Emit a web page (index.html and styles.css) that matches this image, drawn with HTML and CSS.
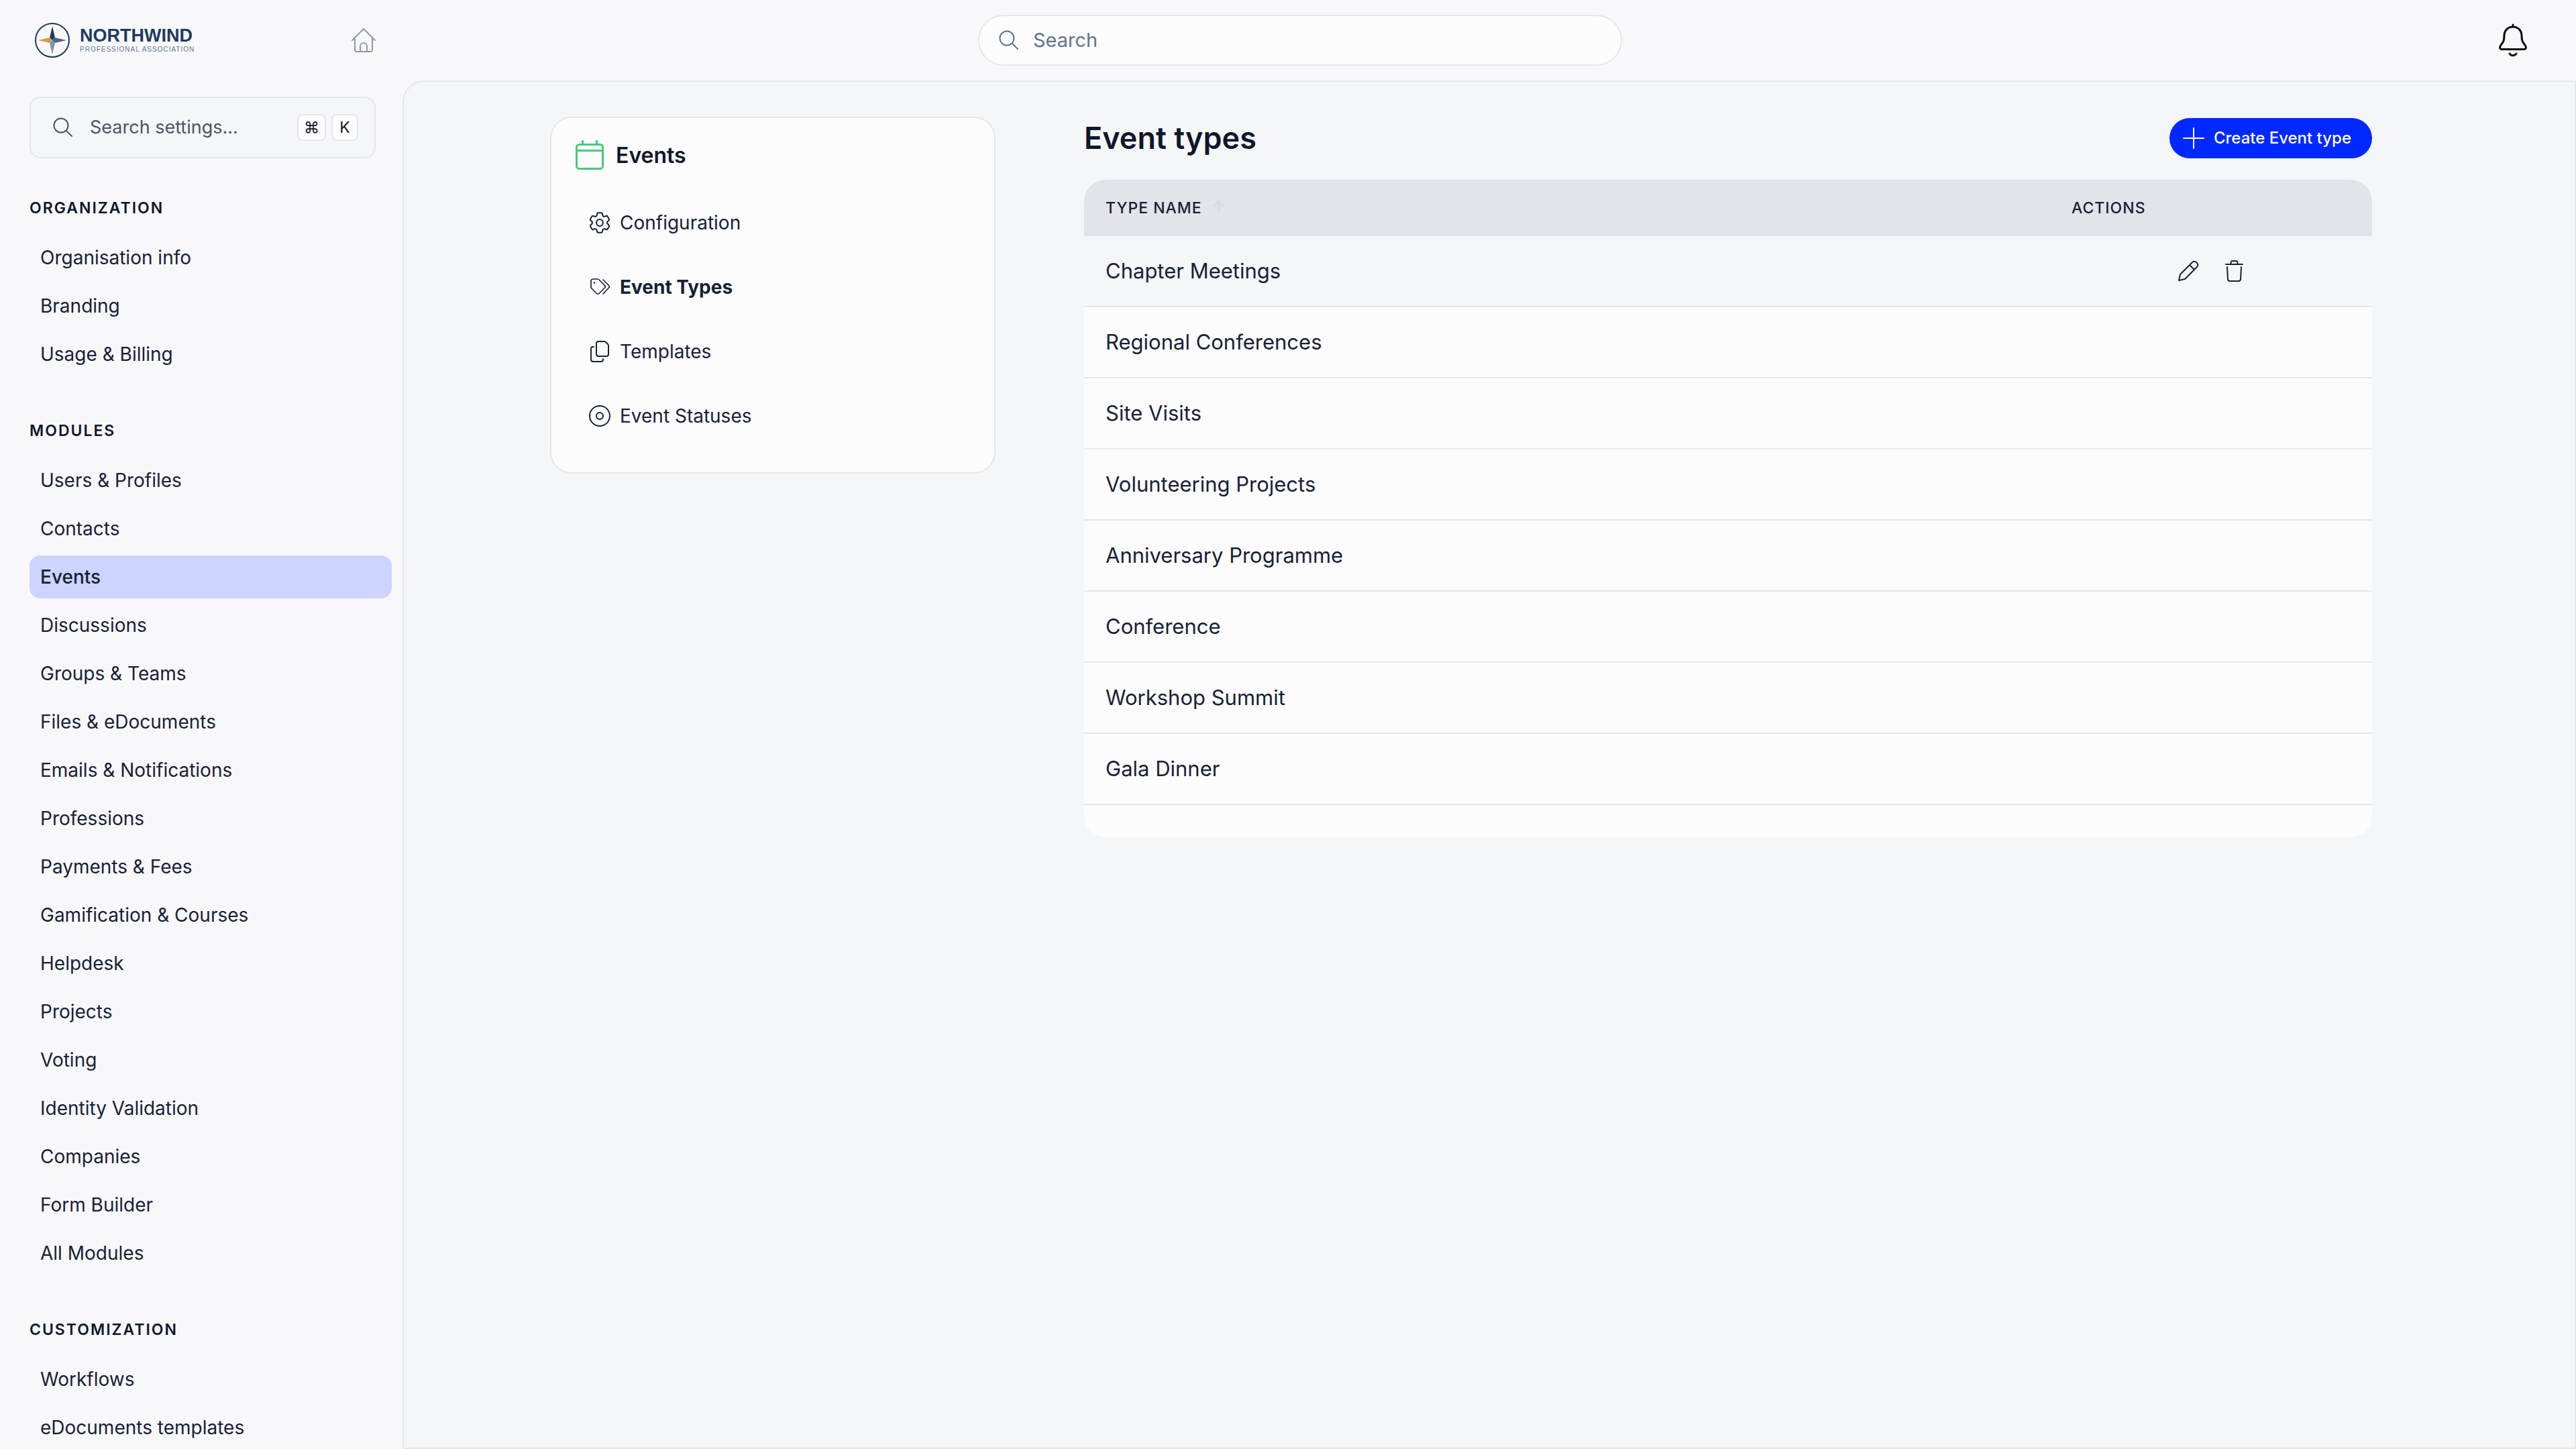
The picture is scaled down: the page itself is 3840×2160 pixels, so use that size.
FILE: index.html
```html
<!DOCTYPE html>
<html lang="en">
<head>
    <meta charset="UTF-8">
    <meta name="viewport" content="width=device-width, initial-scale=1.0">
    <title>Event types</title>
    <link rel="stylesheet" href="styles.css">
</head>
<body>
    <header class="topbar">
        <div class="brand">
            <a class="logo" href="#">
                <svg class="logo-mark" viewBox="0 0 52 52">
                    <circle cx="26" cy="26" r="25" fill="none" stroke="#1f3a5f" stroke-width="2"/>
                    <path d="M26 5l4 17L26 26l-4-4z" fill="#1f3a5f"/>
                    <path d="M47 26l-17 4L26 26l4-4z" fill="#4f6688"/>
                    <path d="M26 47l-4-17L26 26l4 4z" fill="#8294ac"/>
                    <path d="M5 26l17-4L26 26l-4 4z" fill="#c9a14a"/>
                </svg>
                <span class="logo-text">
                    <span class="logo-name">NORTHWIND</span>
                    <span class="logo-sub">PROFESSIONAL ASSOCIATION</span>
                </span>
            </a>
            <a class="home" href="#" aria-label="Home">
                <svg viewBox="0 0 36 36">
                    <path d="M1 18L18 1l17 17M5 15v17a3 3 0 0 0 3 3h20a3 3 0 0 0 3-3V15M13 35v-8a5 5 0 0 1 10 0v8"/>
                </svg>
            </a>
        </div>
        <label class="search">
            <svg viewBox="0 0 32 32"><circle cx="13" cy="13" r="10.500"/><path d="M21 21l8 8"/></svg>
            <input type="text" placeholder="Search" aria-label="Search">
        </label>
        <button class="bell" aria-label="Notifications">
            <svg viewBox="0 0 44 50">
                <path d="M22 2v3M22 5c-8 0-13 6-13 13 0 9-2 10-5.500 15-2 3-.5 5.500 2 5.500h33c2.500 0 4-2.500 2-5.500C37 28 35 27 35 18c0-7-5-13-13-13z"/>
                <path d="M17 45c2.500 3.600 7.500 3.600 10 0"/>
            </svg>
        </button>
    </header>

    <div class="layout">
        <aside class="sidebar">
            <label class="settings-search">
                <svg viewBox="0 0 32 32"><circle cx="13" cy="13" r="10.500"/><path d="M21 21l8 8"/></svg>
                <input type="text" placeholder="Search settings..." aria-label="Search settings">
                <kbd>⌘</kbd>
                <kbd>K</kbd>
            </label>
            <nav>
                <h2>Organization</h2>
                <ul>
                    <li><a href="#">Organisation info</a></li>
                    <li><a href="#">Branding</a></li>
                    <li><a href="#">Usage &amp; Billing</a></li>
                </ul>
                <h2>Modules</h2>
                <ul>
                    <li><a href="#">Users &amp; Profiles</a></li>
                    <li><a href="#">Contacts</a></li>
                    <li><a href="#" class="active">Events</a></li>
                    <li><a href="#">Discussions</a></li>
                    <li><a href="#">Groups &amp; Teams</a></li>
                    <li><a href="#">Files &amp; eDocuments</a></li>
                    <li><a href="#">Emails &amp; Notifications</a></li>
                    <li><a href="#">Professions</a></li>
                    <li><a href="#">Payments &amp; Fees</a></li>
                    <li><a href="#">Gamification &amp; Courses</a></li>
                    <li><a href="#">Helpdesk</a></li>
                    <li><a href="#">Projects</a></li>
                    <li><a href="#">Voting</a></li>
                    <li><a href="#">Identity Validation</a></li>
                    <li><a href="#">Companies</a></li>
                    <li><a href="#">Form Builder</a></li>
                    <li><a href="#">All Modules</a></li>
                </ul>
                <h2>Customization</h2>
                <ul>
                    <li><a href="#">Workflows</a></li>
                    <li><a href="#">eDocuments templates</a></li>
                </ul>
            </nav>
        </aside>

        <main class="content">
            <nav class="card">
                <h3>
                    <svg viewBox="0 0 44 46"><rect x="1.500" y="6.500" width="39" height="36" rx="4"/><path d="M1.500 15.500h39M10.500 1v5M31.500 1v5"/></svg>
                    Events
                </h3>
                <a href="#">
                    <svg viewBox="2.250 2.250 19.500 19.500" stroke-width="1.250">
                        <path d="M9.594 3.940c.09-.542.56-.940 1.110-.940h2.593c.55 0 1.020.398 1.110.940l.213 1.281c.063.374.313.686.645.870.074.040.147.083.220.127.325.196.720.257 1.075.124l1.217-.456a1.125 1.125 0 0 1 1.370.490l1.296 2.247a1.125 1.125 0 0 1-.260 1.431l-1.003.827c-.293.241-.438.613-.430.992a7 7 0 0 1 0 .255c-.008.378.137.750.430.991l1.004.827c.424.350.534.955.260 1.430l-1.298 2.247a1.125 1.125 0 0 1-1.369.491l-1.217-.456c-.355-.133-.750-.072-1.076.124a7 7 0 0 1-.220.128c-.331.183-.581.495-.644.869l-.213 1.281c-.090.543-.560.940-1.110.940h-2.594c-.550 0-1.019-.398-1.110-.940l-.213-1.281c-.062-.374-.312-.686-.644-.870a7 7 0 0 1-.220-.127c-.325-.196-.720-.257-1.076-.124l-1.217.456a1.125 1.125 0 0 1-1.369-.490l-1.297-2.247a1.125 1.125 0 0 1 .260-1.431l1.004-.827c.292-.240.437-.613.430-.991a7 7 0 0 1 0-.255c.007-.380-.138-.751-.430-.992l-1.004-.827a1.125 1.125 0 0 1-.260-1.430l1.297-2.247a1.125 1.125 0 0 1 1.370-.491l1.216.456c.356.133.751.072 1.076-.124.072-.044.146-.086.220-.128.332-.183.582-.495.644-.869z"/>
                        <circle cx="12" cy="12" r="3"/>
                    </svg>
                    Configuration
                </a>
                <a href="#" class="current">
                    <svg viewBox="0 0 32 32" stroke-width="1.700">
                        <path d="M3 7a3 3 0 0 1 3-3h7a3 3 0 0 1 2 1l8.500 8.500a2.500 2.500 0 0 1 0 3.500l-8.500 8.500a2.500 2.500 0 0 1-3.500 0L4 18a3 3 0 0 1-1-2z"/>
                        <path d="M21 5l8.500 8.500a2.500 2.500 0 0 1 0 3.500L21 26"/>
                        <circle cx="8" cy="9.500" r=".5"/>
                    </svg>
                    Event Types
                </a>
                <a href="#">
                    <svg viewBox="0 0 32 32" stroke-width="2">
                        <path d="M11 4a3 3 0 0 1 3-3h9a3 3 0 0 1 2 1l3 3a3 3 0 0 1 1 2v13a3 3 0 0 1-3 3H14a3 3 0 0 1-3-3zM7 9H6a3 3 0 0 0-3 3v16a3 3 0 0 0 3 3h12a3 3 0 0 0 3-3v-1"/>
                    </svg>
                    Templates
                </a>
                <a href="#">
                    <svg viewBox="0 0 32 32" stroke-width="2"><circle cx="16" cy="16" r="15"/><circle cx="16" cy="16" r="5"/></svg>
                    Event Statuses
                </a>
            </nav>

            <section class="types">
                <div class="types-head">
                    <h1>Event types</h1>
                    <button class="create">
                        <svg viewBox="0 0 32 32"><path d="M16 1v30M1 16h30"/></svg>
                        Create Event type
                    </button>
                </div>
                <div class="table-wrap">
                    <table>
                        <thead>
                            <tr>
                                <th class="col-name">Type name <svg viewBox="0 0 16 20"><path d="M8 19V2M1 9l7-7 7 7"/></svg></th>
                                <th class="col-actions">Actions</th>
                            </tr>
                        </thead>
                        <tbody>
                            <tr class="hovered">
                                <td>Chapter Meetings</td>
                                <td>
                                    <div class="actions">
                                        <button aria-label="Edit">
                                            <svg viewBox="0 0 32 32"><path d="M2 30l2-9L22 3a4 4 0 0 1 6 0l1 1a4 4 0 0 1 0 6L11 28zM18 7l7 7"/></svg>
                                        </button>
                                        <button aria-label="Delete">
                                            <svg viewBox="0 0 32 32"><path d="M4 6h25M11 6l1-4a2 2 0 0 1 2-1h5a2 2 0 0 1 2 1l1 4M6 10l1 18a3 3 0 0 0 3 3h13a3 3 0 0 0 3-3l1-18"/></svg>
                                        </button>
                                    </div>
                                </td>
                            </tr>
                            <tr><td>Regional Conferences</td><td></td></tr>
                            <tr><td>Site Visits</td><td></td></tr>
                            <tr><td>Volunteering Projects</td><td></td></tr>
                            <tr><td>Anniversary Programme</td><td></td></tr>
                            <tr><td>Conference</td><td></td></tr>
                            <tr><td>Workshop Summit</td><td></td></tr>
                            <tr><td>Gala Dinner</td><td></td></tr>
                        </tbody>
                    </table>
                </div>
            </section>
        </main>
    </div>
</body>
</html>
```
FILE: styles.css
```css
:root {
    --page: #f8f8fb;
    --content: #f4f6f8;
    --surface: #fcfcfd;
    --border: #e5e7eb;
    --text: #172136;
    --heading: #0f172a;
    --muted: #4b5563;
    --primary: #0029ff;
    --active: #ccd4ff;
}

* {
    box-sizing: border-box;
}

body {
    display: flex;
    flex-direction: column;
    height: 100vh;
    margin: 0;
    overflow: hidden;
    background-color: var(--page);
    color: var(--text);
    font-family: Inter, 'Liberation Sans', sans-serif;
    font-size: 28px;
    line-height: 40px;
}

h1, h2, h3, ul {
    margin: 0;
    padding: 0;
}

ul {
    list-style: none;
}

a {
    color: inherit;
    text-decoration: none;
}

button, input {
    font: inherit;
    color: inherit;
    border: none;
    background: none;
    padding: 0;
    cursor: pointer;
}

input {
    flex: 1;
    min-width: 0;
    outline: none;
    cursor: text;
}

svg {
    display: block;
    flex: none;
    width: 32px;
    height: 32px;
    fill: none;
    stroke: currentColor;
    stroke-linecap: round;
    stroke-linejoin: round;
}

/* top bar */
.topbar {
    display: grid;
    grid-template-columns: 1fr 25vw 1fr;
    align-items: center;
    height: 120px;
    flex: none;
    padding-left: 36px;
}

.brand {
    display: flex;
    align-items: center;
    justify-content: space-between;
    width: 524px;
    padding-left: 16px;
}

.logo {
    display: flex;
    align-items: center;
    gap: 15px;
    font-family: 'Liberation Sans', Arial, sans-serif;
}

.logo .logo-mark {
    width: 52px;
    height: 52px;
}

.logo-mark path {
    stroke: none;
}

.logo-text {
    display: flex;
    flex-direction: column;
}

.logo-name {
    color: #1f3a5f;
    font-size: 27px;
    font-weight: bold;
    line-height: 28px;
}

.logo-sub {
    color: #5f7896;
    font-size: 10px;
    line-height: 14px;
    letter-spacing: 1px;
}

.home {
    color: #9099a8;
}

.home svg {
    width: 36px;
    height: 36px;
    stroke-width: 2;
}

.search {
    display: flex;
    align-items: center;
    gap: 20px;
    height: 76px;
    padding: 0 28px;
    border: 2px solid var(--border);
    border-radius: 38px;
    background-color: var(--surface);
    color: #64748b;
    font-size: 29px;
}

.search svg,
.settings-search svg,
.create svg,
.actions svg {
    stroke-width: 2;
}

.search input::placeholder,
.settings-search input::placeholder {
    color: inherit;
    opacity: 1;
}

.bell {
    justify-self: end;
    margin-right: 72px;
    color: #0a0a0f;
}

.bell svg {
    width: 44px;
    height: 50px;
    stroke-width: 3;
}

/* sidebar */
.layout {
    display: flex;
    flex: 1;
    min-height: 0;
}

.sidebar {
    width: 600px;
    flex: none;
    padding: 24px 16px 0 44px;
    overflow: hidden;
}

.settings-search {
    display: flex;
    align-items: center;
    gap: 8px;
    height: 92px;
    margin-right: 24px;
    padding: 0 24px 0 32px;
    border: 2px solid var(--border);
    border-radius: 16px;
    background-color: var(--content);
    color: var(--muted);
    font-size: 27px;
}

.settings-search input {
    margin-left: 16px;
}

kbd {
    min-width: 40px;
    padding: 0 8px;
    border: 2px solid var(--border);
    border-radius: 8px;
    background-color: var(--surface);
    color: var(--heading);
    font-family: inherit;
    font-size: 23px;
    line-height: 36px;
    text-align: center;
}

.sidebar h2 {
    margin: 64px 0 24px;
    color: var(--heading);
    font-size: 23px;
    font-weight: 600;
    line-height: 36px;
    letter-spacing: 2px;
    text-transform: uppercase;
}

.sidebar h2:first-child {
    margin-top: 56px;
}

.sidebar ul {
    display: flex;
    flex-direction: column;
    gap: 8px;
}

.sidebar li a {
    display: block;
    padding: 12px 16px;
    border-radius: 16px;
}

.sidebar li .active {
    background-color: var(--active);
    font-weight: 500;
}

/* content */
.content {
    display: grid;
    grid-template-columns: 664px minmax(0, 1fr);
    gap: 132px;
    align-items: start;
    flex: 1;
    padding: 52px 302px 0 218px;
    border: 2px solid var(--border);
    border-top-left-radius: 32px;
    background-color: var(--content);
}

.card {
    padding: 32px 36px 36px;
    border: 2px solid var(--border);
    border-radius: 32px;
    background-color: var(--surface);
}

.card h3 {
    display: flex;
    align-items: center;
    gap: 16px;
    margin-bottom: 28px;
    color: var(--heading);
    font-size: 32px;
    font-weight: 600;
    line-height: 48px;
}

.card h3 svg {
    width: 44px;
    height: 46px;
    color: #4ac97a;
    stroke-width: 3;
}

.card a {
    display: flex;
    align-items: center;
    gap: 14px;
    padding: 28px 20px;
}

.card .current {
    font-weight: 700;
}

.types-head {
    display: flex;
    align-items: center;
    justify-content: space-between;
    margin-bottom: 30px;
}

h1 {
    color: var(--heading);
    font-size: 45px;
    font-weight: 600;
    line-height: 64px;
}

.create {
    display: flex;
    align-items: center;
    gap: 14px;
    height: 60px;
    padding: 0 31px 0 20px;
    border-radius: 30px;
    background-color: var(--primary);
    color: #fff;
    font-size: 24px;
    font-weight: 500;
}

.table-wrap {
    padding-bottom: 48px;
    border-radius: 32px;
    background-color: var(--surface);
    overflow: hidden;
}

table {
    width: 100%;
    border-collapse: separate;
    border-spacing: 0;
    table-layout: fixed;
}

th {
    height: 84px;
    padding: 0 32px;
    background-color: #e2e4ea;
    font-size: 23px;
    font-weight: 500;
    letter-spacing: 1px;
    text-align: left;
    text-transform: uppercase;
}

.col-actions {
    width: 25%;
}

th svg {
    display: inline-block;
    width: 16px;
    height: 20px;
    margin-left: 10px;
    color: #d8dce1;
    stroke-width: 3;
}

td {
    height: 106px;
    padding: 0 32px;
    border-bottom: 2px solid var(--border);
    font-size: 31px;
}

.hovered {
    background-color: var(--content);
}

.actions {
    display: flex;
    justify-content: center;
    gap: 36px;
}
```
